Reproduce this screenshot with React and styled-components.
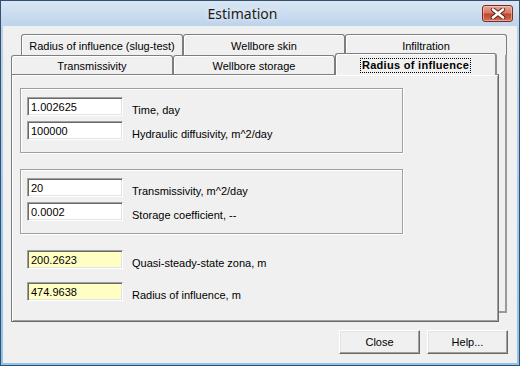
import React from 'react'
import styled, { createGlobalStyle } from 'styled-components'

const GlobalStyle = createGlobalStyle`
  html, body {
    margin: 0;
    padding: 0;
    background: #ffffff;
  }
  body {
    font-family: "Liberation Sans", Arial, sans-serif;
    font-size: 11px;
    color: #000;
  }
`

const Window = styled.div`
  width: 520px;
  height: 366px;
  box-sizing: border-box;
  border: 1px solid #34506e;
  background: linear-gradient(#d9e6f4, #bcd3ea 25px, #8cc4ee);
  padding: 0 2px 2px;
  display: flex;
  flex-direction: column;
`

const TitleBar = styled.div`
  height: 25px;
  display: flex;
  align-items: flex-start;
`

const Title = styled.div`
  flex: 1;
  text-align: center;
  font-family: "Noto Sans", "Open Sans", sans-serif;
  font-size: 14px;
  line-height: 25px;
  color: #1b1b1b;
  text-shadow: 0 0 6px rgba(255, 255, 255, 0.9);
`

const CloseBox = styled.div`
  width: 31px;
  height: 17px;
  margin: 4px 4px 0 0;
  box-sizing: border-box;
  border: 1px solid #7b2b20;
  border-radius: 3px;
  background: linear-gradient(#e9a596, #d87a66 45%, #c0452e 55%, #d0705a);
  box-shadow: inset 0 0 0 1px rgba(255, 220, 210, 0.5);
  display: flex;
  align-items: center;
  justify-content: center;
`

const Client = styled.div`
  flex: 1;
  background: #f0f0f0;
  padding-top: 8px;
  display: flex;
  flex-direction: column;
`

const TabRow = styled.div`
  display: flex;
  align-items: flex-end;
  margin-left: ${p => p.$offset}px;
  height: ${p => p.$height}px;
`

const Tab = styled.div`
  width: 162px;
  height: ${p => p.$height}px;
  box-sizing: border-box;
  border: 1px solid #7d7d7d;
  border-bottom: none;
  border-radius: 3px 3px 0 0;
  background: #f0f0f0;
  box-shadow: inset 1px 1px 0 #ffffff;
  display: flex;
  align-items: center;
  justify-content: center;
  white-space: nowrap;
  padding-top: 1px;
`

const ActiveTab = styled(Tab)`
  position: relative;
  z-index: 2;
  height: 22px;
  margin-bottom: -1px;
  border-right: 2px solid #8e8e8e;
  font-weight: bold;
  padding-top: 2px;
`

const FocusText = styled.span`
  outline: 1px dotted #000;
  outline-offset: 0;
  padding: 0 1px;
  line-height: 13px;
  letter-spacing: 0.3px;
`

const FrontRow = styled.div`
  display: flex;
  margin-left: 8px;
`

const FrontColumn = styled.div`
  display: flex;
  flex-direction: column;
`

const BackEdge = styled.div`
  width: 8px;
  height: 258px;
  box-sizing: border-box;
  border-right: 2px solid #9a9a9a;
  border-bottom: 2px solid #9a9a9a;
`

const Panel = styled.div`
  width: 488px;
  height: 248px;
  box-sizing: border-box;
  border: 1px solid #7d7d7d;
  border-right-color: #6a6a6a;
  border-bottom-color: #6a6a6a;
  box-shadow: inset 1px 1px 0 #fff, inset -1px -1px 0 #a0a0a0;
  padding: 13px 0 0 8px;
  display: flex;
  flex-direction: column;
`

const Group = styled.div`
  width: 383px;
  height: 65px;
  box-sizing: border-box;
  border: 1px solid #a0a0a0;
  box-shadow: 1px 1px 0 #fff, inset 1px 1px 0 #fff;
  padding: 8px 0 0 6px;
  margin-bottom: 16px;
  display: flex;
  flex-direction: column;
  gap: 5px;
`

const Results = styled.div`
  display: flex;
  flex-direction: column;
  gap: 13px;
  padding-left: 7px;
`

const Row = styled.div`
  display: flex;
  align-items: flex-start;
  height: 19px;
`

const Field = styled.div`
  width: 96px;
  height: 19px;
  box-sizing: border-box;
  border: 1px solid;
  border-color: #a0a0a0 #ffffff #ffffff #a0a0a0;
  box-shadow: inset 1px 1px 0 #696969, inset -1px -1px 0 #e3e3e3;
  background: ${p => (p.$result ? '#ffffc4' : '#ffffff')};
  padding: 2px 0 0 3px;
  line-height: 14px;
`

const Label = styled.div`
  margin: 7px 0 0 9px;
  line-height: 13px;
  white-space: nowrap;
`

const ButtonBar = styled.div`
  display: flex;
  justify-content: flex-end;
  gap: 7px;
  margin-top: 8px;
  padding-right: 9px;
`

const Button = styled.div`
  width: 81px;
  height: 24px;
  box-sizing: border-box;
  border: 1px solid;
  border-color: #ffffff #696969 #696969 #ffffff;
  box-shadow: inset -1px -1px 0 #a0a0a0, inset 1px 1px 0 #e3e3e3;
  background: #f0f0f0;
  display: flex;
  align-items: center;
  justify-content: center;
`

const groups = [
  [
    { value: '1.002625', label: 'Time, day' },
    { value: '100000', label: 'Hydraulic diffusivity, m^2/day' }
  ],
  [
    { value: '20', label: 'Transmissivity, m^2/day' },
    { value: '0.0002', label: 'Storage coefficient, --' }
  ]
]

const results = [
  { value: '200.2623', label: 'Quasi-steady-state zona, m' },
  { value: '474.9638', label: 'Radius of influence, m' }
]

const CloseIcon = () => (
  <svg width='16' height='11' viewBox='0 0 16 11'>
    <path d='M3 1.5 L13 9.5 M13 1.5 L3 9.5' stroke='#5a1f16' strokeWidth='4.4' strokeLinecap='round' />
    <path d='M3 1.5 L13 9.5 M13 1.5 L3 9.5' stroke='#ffffff' strokeWidth='2.6' strokeLinecap='round' />
  </svg>
)

export default function App () {
  return (
    <Window>
      <GlobalStyle />
      <TitleBar>
        <Title>Estimation</Title>
        <CloseBox><CloseIcon /></CloseBox>
      </TitleBar>
      <Client>
        <TabRow $offset={18} $height={21}>
          <Tab $height={21}>Radius of influence (slug-test)</Tab>
          <Tab $height={21}>Wellbore skin</Tab>
          <Tab $height={21}>Infiltration</Tab>
        </TabRow>
        <FrontRow>
          <FrontColumn>
            <TabRow $offset={0} $height={19}>
              <Tab $height={19}>Transmissivity</Tab>
              <Tab $height={19}>Wellbore storage</Tab>
              <ActiveTab><FocusText>Radius of influence</FocusText></ActiveTab>
            </TabRow>
            <Panel>
              {groups.map((rows, i) => (
                <Group key={i}>
                  {rows.map(r => (
                    <Row key={r.label}>
                      <Field>{r.value}</Field>
                      <Label>{r.label}</Label>
                    </Row>
                  ))}
                </Group>
              ))}
              <Results>
                {results.map(r => (
                  <Row key={r.label}>
                    <Field $result>{r.value}</Field>
                    <Label>{r.label}</Label>
                  </Row>
                ))}
              </Results>
            </Panel>
          </FrontColumn>
          <BackEdge />
        </FrontRow>
        <ButtonBar>
          <Button>Close</Button>
          <Button>Help...</Button>
        </ButtonBar>
      </Client>
    </Window>
  )
}
